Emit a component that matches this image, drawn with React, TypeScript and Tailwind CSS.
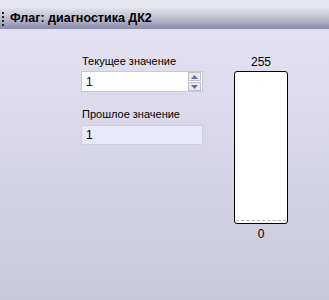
import React from 'react';

const font = { fontFamily: '"Liberation Sans", Arial, sans-serif' };

const App: React.FC = () => {
  return (
    <div className="w-[329px] h-[300px] flex flex-col overflow-hidden text-black" style={font}>
      <div className="h-[8px] bg-[#e6e6f0]"></div>
      <div className="h-[21px] flex items-center bg-gradient-to-b from-[#e2e2ec] via-[#bdbdd0] to-[#8a8aaa]">
        <div className="flex flex-col gap-[2px] ml-[2px] mr-[6px]">
          <span className="w-[2px] h-[2px] bg-[#202030]"></span>
          <span className="w-[2px] h-[2px] bg-[#202030]"></span>
          <span className="w-[2px] h-[2px] bg-[#202030]"></span>
          <span className="w-[2px] h-[2px] bg-[#202030]"></span>
        </div>
        <span className="text-[12.5px] font-bold leading-none">Флаг: диагностика ДК2</span>
      </div>
      <div className="flex-1 flex bg-gradient-to-b from-[#e4e2f2] to-[#c8c8d8] pt-[27px]">
        <div className="ml-[81px] w-[122px] flex flex-col">
          <span className="text-[11px] leading-none pl-[1px]">Текущее значение</span>
          <div className="mt-[4px] h-[21px] bg-white border border-[#c8c8d4] flex items-center">
            <span className="flex-1 text-[12px] pl-[4px]">1</span>
            <div className="w-[13px] h-[19px] flex flex-col gap-[1px] mr-[1px]">
              <div className="flex-1 bg-[#e8e8f0] border border-[#c0c0cc] flex items-center justify-center">
                <svg width="7" height="4" viewBox="0 0 7 4"><path d="M3.5 0 L7 4 L0 4 Z" fill="#6070a0" /></svg>
              </div>
              <div className="flex-1 bg-[#e8e8f0] border border-[#c0c0cc] flex items-center justify-center">
                <svg width="7" height="4" viewBox="0 0 7 4"><path d="M0 0 L7 0 L3.5 4 Z" fill="#6070a0" /></svg>
              </div>
            </div>
          </div>
          <span className="mt-[17px] text-[11px] leading-none pl-[1px]">Прошлое значение</span>
          <div className="mt-[5px] h-[20px] bg-[#e8e8f6] border border-[#d0d0dc] flex items-center">
            <span className="text-[12px] pl-[4px]">1</span>
          </div>
        </div>
        <div className="ml-[31px] w-[54px] flex flex-col items-center">
          <span className="text-[12px] leading-none">255</span>
          <div className="mt-[3px] w-[54px] h-[153px] bg-white border border-black rounded-[3px] flex flex-col justify-end">
            <div className="border-t border-dashed border-[#b0b0b0] mb-[2px] mx-[1px]"></div>
          </div>
          <span className="mt-[4px] text-[12px] leading-none">0</span>
        </div>
      </div>
    </div>
  );
};

export default App;
